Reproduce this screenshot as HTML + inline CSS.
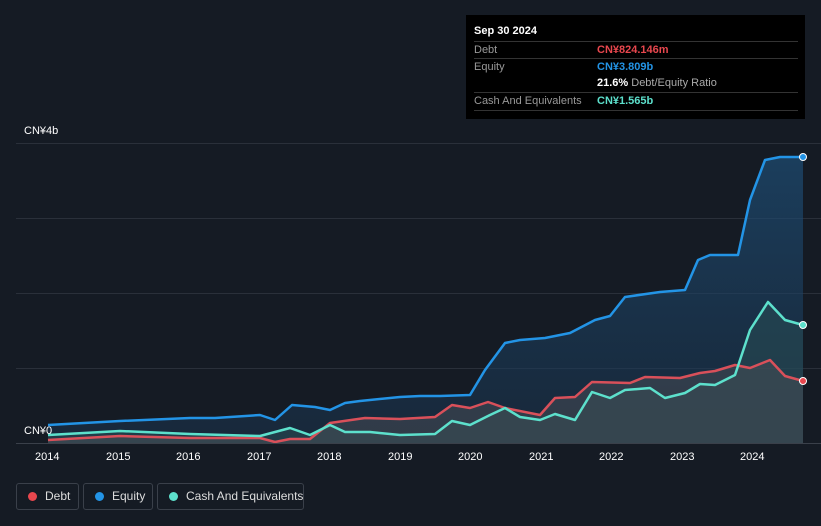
<!DOCTYPE html>
<html><head><meta charset="utf-8"><style>
body{margin:0;width:821px;height:526px;background:#151b24;font-family:"Liberation Sans",sans-serif;overflow:hidden;position:relative}
.tt{position:absolute;left:466px;top:15px;width:339px;height:104px;background:#000;color:#fff;font-size:11px}
.tt .h{position:absolute;left:8px;top:10px;font-weight:bold}
.row{position:absolute;left:8px;width:324px;border-top:1px solid #333;height:17px;line-height:17px}
.row .l{color:#999;position:absolute;left:0}
.row .v{position:absolute;left:123px;font-weight:bold;white-space:nowrap}
.ax{position:absolute;color:#fff;font-size:11px}
.leg{position:absolute;top:483px;height:27px;border:1px solid #3a404a;border-radius:3px;color:#ddd;font-size:12px;line-height:25px;box-sizing:border-box;white-space:nowrap}
.leg i{position:absolute;left:11px;top:8px;width:9px;height:9px;border-radius:50%}
</style></head><body>
<svg width="821" height="526" style="position:absolute;left:0;top:0">
<defs><linearGradient id="g" x1="0" y1="0" x2="0" y2="1"><stop offset="0" stop-color="#1e4d75" stop-opacity=".7"/><stop offset="1" stop-color="#1a3550" stop-opacity=".5"/></linearGradient></defs>
<g stroke="#2a303a" stroke-width="1"><line x1="16" y1="143.5" x2="821" y2="143.5"/><line x1="16" y1="218.5" x2="821" y2="218.5"/><line x1="16" y1="293.5" x2="821" y2="293.5"/><line x1="16" y1="368.5" x2="821" y2="368.5"/></g>
<polygon fill="url(#g)" points="48,443 48,425 120,421 190,418 215,418 260,415 275,420 292,405 315,407 330,410 345,403 360,401 400,397 420,396 440,396 470,395 485,370 505,343 520,340 545,338 570,333 595,320 610,316 625,297 660,292 685,290 698,260 710,255 738,255 750,200 765,160 780,157 803,157 803,443"/>
<polygon fill="#2a4f55" fill-opacity=".5" points="48,443 48,435 120,431 190,434 260,436 290,428 310,435 330,425 345,432 370,432 400,435 435,434 452,421 470,425 490,415 505,408 520,417 540,420 555,414 575,420 592,392 610,398 625,390 650,388 665,398 685,393 700,384 715,385 735,375 750,330 768,302 785,320 803,325 803,443"/>
<polygon fill="#4a4e56" fill-opacity=".5" points="48,443 48,440 120,436 190,438 260,438 275,442 290,439 310,439 330,423 365,418 400,419 435,417 452,405 470,408 488,402 505,408 540,415 555,398 575,397 592,382 630,383 645,377 680,378 700,373 715,371 735,365 750,368 770,360 785,376 803,381 803,443"/>
<g fill="none" stroke-width="2.5" stroke-linejoin="round">
<polyline stroke="#2394e6" points="48,425 120,421 190,418 215,418 260,415 275,420 292,405 315,407 330,410 345,403 360,401 400,397 420,396 440,396 470,395 485,370 505,343 520,340 545,338 570,333 595,320 610,316 625,297 660,292 685,290 698,260 710,255 738,255 750,200 765,160 780,157 803,157"/>
<polyline stroke="#d9505a" points="48,440 120,436 190,438 260,438 275,442 290,439 310,439 330,423 365,418 400,419 435,417 452,405 470,408 488,402 505,408 540,415 555,398 575,397 592,382 630,383 645,377 680,378 700,373 715,371 735,365 750,368 770,360 785,376 803,381"/>
<polyline stroke="#5de0cc" points="48,435 120,431 190,434 260,436 290,428 310,435 330,425 345,432 370,432 400,435 435,434 452,421 470,425 490,415 505,408 520,417 540,420 555,414 575,420 592,392 610,398 625,390 650,388 665,398 685,393 700,384 715,385 735,375 750,330 768,302 785,320 803,325"/>
</g>
<line x1="16" y1="443.5" x2="821" y2="443.5" stroke="#3a404a"/>
<circle cx="803" cy="157" r="3.5" fill="#2394e6" stroke="#fff" stroke-width="1"/>
<circle cx="803" cy="325" r="3.5" fill="#5de0cc" stroke="#fff" stroke-width="1"/>
<circle cx="803" cy="381" r="3.5" fill="#e8474e" stroke="#fff" stroke-width="1"/>
</svg>
<div class="ax" style="left:24px;top:125px">CN¥4b</div>
<div class="ax" style="left:24px;top:425px">CN¥0</div>
<div class="ax" style="left:35px;top:451px">2014</div>
<div class="ax" style="left:106px;top:451px">2015</div>
<div class="ax" style="left:176px;top:451px">2016</div>
<div class="ax" style="left:247px;top:451px">2017</div>
<div class="ax" style="left:317px;top:451px">2018</div>
<div class="ax" style="left:388px;top:451px">2019</div>
<div class="ax" style="left:458px;top:451px">2020</div>
<div class="ax" style="left:529px;top:451px">2021</div>
<div class="ax" style="left:599px;top:451px">2022</div>
<div class="ax" style="left:670px;top:451px">2023</div>
<div class="ax" style="left:740px;top:451px">2024</div>
<div class="tt"><div class="h">Sep 30 2024</div>
<div class="row" style="top:26px"><span class="l">Debt</span><span class="v" style="color:#e8474e">CN¥824.146m</span></div>
<div class="row" style="top:43px"><span class="l">Equity</span><span class="v" style="color:#2394e6">CN¥3.809b</span></div>
<div class="row" style="top:60px;border-top:none"><span class="v">21.6% <span style="color:#aaa;font-weight:normal">Debt/Equity Ratio</span></span></div>
<div class="row" style="top:77px"><span class="l">Cash And Equivalents</span><span class="v" style="color:#5de0cc">CN¥1.565b</span></div>
<div class="row" style="top:95px;height:0"></div>
</div>
<div class="leg" style="left:16px;width:63px"><i style="background:#e8474e"></i><span style="position:absolute;left:28px">Debt</span></div>
<div class="leg" style="left:83px;width:70px"><i style="background:#2394e6"></i><span style="position:absolute;left:28px">Equity</span></div>
<div class="leg" style="left:157px;width:147px"><i style="background:#5de0cc"></i><span style="position:absolute;left:28px">Cash And Equivalents</span></div>
</body></html>
